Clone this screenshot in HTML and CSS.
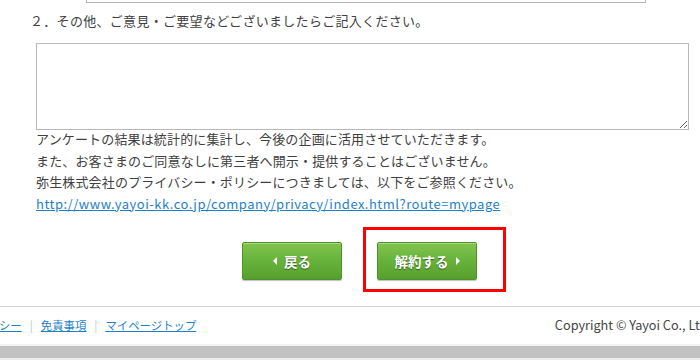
FILE: index.html
```html
<!DOCTYPE html>
<html lang="ja">
<head>
    <meta charset="UTF-8">
    <meta name="viewport" content="width=device-width, initial-scale=1.0">
    <title>解約アンケート</title>
    <link rel="stylesheet" href="styles.css">
</head>
<body>
    <div class="page">
        <div class="prev-box"></div>
        <p class="question">２．その他、ご意見・ご要望などございましたらご記入ください。</p>
        <textarea class="comment" name="comment"></textarea>
        <div class="notes">
            <p>アンケートの結果は統計的に集計し、今後の企画に活用させていただきます。</p>
            <p>また、お客さまのご同意なしに第三者へ開示・提供することはございません。</p>
            <p>弥生株式会社のプライバシー・ポリシーにつきましては、以下をご参照ください。</p>
            <p><a href="#">http://www.yayoi-kk.co.jp/company/privacy/index.html?route=mypage</a></p>
        </div>
        <div class="actions">
            <button type="button" class="btn btn-back"><span class="tri tri-left"></span>戻る</button>
            <span class="highlight">
                <button type="submit" class="btn btn-next">解約する<span class="tri tri-right"></span></button>
            </span>
        </div>
    </div>
    <footer class="footer">
        <div class="footer-links">
            <a href="#">プライバシーポリシー</a>
            <span class="sep">|</span>
            <a href="#">免責事項</a>
            <span class="sep">|</span>
            <a href="#">マイページトップ</a>
        </div>
        <div class="copyright">Copyright © Yayoi Co., Ltd.</div>
    </footer>
    <div class="bottom-bar"></div>
</body>
</html>
```
FILE: styles.css
```css
html, body {
    margin: 0;
    padding: 0;
    overflow: hidden;
}
body {
    font-family: "Noto Sans CJK JP", "Noto Sans", sans-serif;
    font-size: 13px;
    color: #404040;
    background: #fff;
    width: 700px;
}
p {
    margin: 0;
}
.prev-box {
    margin-left: 86px;
    width: 558px;
    height: 2px;
    border: 1px solid #b4b4b4;
    border-top: none;
}
.question {
    margin: 8px 0 0 30px;
    line-height: 20px;
    height: 20px;
    letter-spacing: 0.3px;
}
.comment {
    display: block;
    box-sizing: border-box;
    margin: 12px 0 0 36px;
    width: 653px;
    height: 87px;
    border: 1px solid #b8b8b8;
    padding: 2px;
    resize: both;
    font-family: inherit;
}
.notes {
    margin: -2px 0 0 36px;
    line-height: 21.5px;
    letter-spacing: 0.15px;
}
.notes a {
    color: #1f7fc7;
    text-decoration: underline;
    letter-spacing: 0.5px;
}
.actions {
    display: flex;
    align-items: flex-start;
    margin-top: 13px;
    padding-left: 242px;
    gap: 21px;
}
.btn {
    box-sizing: border-box;
    width: 100px;
    height: 38px;
    display: flex;
    align-items: center;
    justify-content: center;
    gap: 7px;
    border: 1px solid #4f9229;
    border-radius: 2px;
    background: linear-gradient(#82c550, #66b23a 50%, #58a02e);
    box-shadow: inset 0 1px 0 #a5d97d, 0 1px 1px rgba(0, 0, 0, 0.25);
    color: #fff;
    font-family: inherit;
    font-size: 13.5px;
    font-weight: bold;
    text-shadow: 0 1px 1px rgba(0, 0, 0, 0.45);
    cursor: pointer;
    margin-top: 15px;
}
.btn-next {
    margin: 0;
}
.tri {
    display: inline-block;
    width: 0;
    height: 0;
    border-top: 4.5px solid transparent;
    border-bottom: 4.5px solid transparent;
}
.tri-left {
    border-right: 4.5px solid #fff;
}
.tri-right {
    border-left: 4.5px solid #fff;
}
.highlight {
    display: block;
    border: 3px solid #f00;
    padding: 12px 26px 9px 11px;
}
.footer {
    margin-top: 14px;
    border-top: 1px solid #d4d4d4;
    display: flex;
    justify-content: space-between;
    align-items: center;
    height: 35px;
    margin-left: -92px;
    margin-right: -11px;
}
.footer-links {
    display: flex;
    align-items: center;
    gap: 6px;
    font-size: 11.4px;
}
.footer-links a {
    color: #1f7fc7;
}
.sep {
    color: #b9c8d8;
    padding: 0 2px;
}
.copyright {
    color: #444;
    font-size: 12.7px;
}
.bottom-bar {
    height: 12px;
    margin-top: 2px;
    background: #c2c2c2;
    border-top: 2px solid #f2f2f2;
    border-bottom: 2px solid #ececec;
    box-shadow: 0 2px 0 #999;
}
```
